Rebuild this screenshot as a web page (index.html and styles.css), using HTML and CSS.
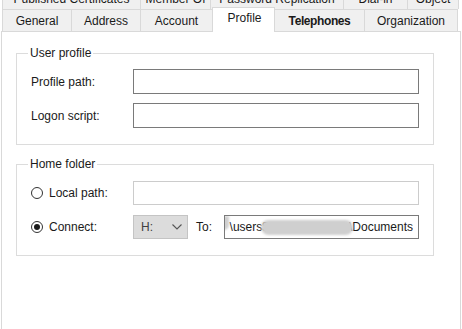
FILE: index.html
```html
<!DOCTYPE html>
<html lang="en">
<head>
    <meta charset="UTF-8">
    <meta name="viewport" content="width=device-width, initial-scale=1.0">
    <title>Profile</title>
    <link rel="stylesheet" href="styles.css">
</head>
<body>
    <div class="dialog">
        <div class="tabs tabs-back">
            <div class="tab tab-pub">Published Certificates</div>
            <div class="tab tab-member">Member Of</div>
            <div class="tab tab-pass">Password Replication</div>
            <div class="tab tab-dial">Dial-in</div>
            <div class="tab tab-object">Object</div>
        </div>
        <div class="tabs tabs-front">
            <div class="tab tab-general">General</div>
            <div class="tab tab-address">Address</div>
            <div class="tab tab-account">Account</div>
            <div class="tab tab-profile active">Profile</div>
            <div class="tab tab-phones">Telephones</div>
            <div class="tab tab-org">Organization</div>
        </div>

        <div class="panel">
            <div class="group group-profile">
                <div class="legend">User profile</div>
                <div class="row">
                    <label class="label" for="profilePath">Profile path:</label>
                    <input class="field" type="text" id="profilePath">
                </div>
                <div class="row">
                    <label class="label" for="logonScript">Logon script:</label>
                    <input class="field" type="text" id="logonScript">
                </div>
            </div>

            <div class="group group-home">
                <div class="legend">Home folder</div>
                <div class="row row-home">
                    <div class="label radio-label">
                        <span class="radio"></span>
                        <span>Local path:</span>
                    </div>
                    <input class="field field-disabled" type="text" disabled>
                </div>
                <div class="row row-home">
                    <div class="label radio-label">
                        <span class="radio checked"></span>
                        <span>Connect:</span>
                    </div>
                    <div class="drive-select">
                        <span>H:</span>
                        <svg class="chevron" width="10" height="6" viewBox="0 0 10 6">
                            <polyline points="0.5,0.5 5,5 9.5,0.5" fill="none" stroke="#555" stroke-width="1.1"/>
                        </svg>
                    </div>
                    <span class="to-label">To:</span>
                    <div class="path-field">
                        <span class="smudge smudge-start"></span>
                        <span>\users$</span>
                        <span class="smudge smudge-mid"></span>
                        <span>\Documents</span>
                    </div>
                </div>
            </div>
        </div>
    </div>
</body>
</html>
```

FILE: styles.css
```css
body {
    margin: 0;
    background: #ffffff;
    font-family: "Liberation Sans", Arial, sans-serif;
    font-size: 12px;
    color: #1a1a1a;
    overflow: hidden;
}

.dialog {
    width: 462px;
    height: 329px;
    overflow: hidden;
}

/* tab strips */
.tabs {
    display: flex;
    margin-left: 2px;
}
.tabs-back {
    margin-top: -13px;
    height: 22px;
}
.tabs-front {
    height: 22px;
    align-items: flex-end;
}
.tab {
    box-sizing: border-box;
    height: 22px;
    display: flex;
    align-items: center;
    justify-content: center;
    background: #f0f0f0;
    border-top: 1px solid #d9d9d9;
    border-left: 1px solid #d9d9d9;
    white-space: nowrap;
}
.tab-object,
.tab-org {
    border-right: 1px solid #d9d9d9;
}
.tab-pub { width: 138px; }
.tab-member { width: 70px; }
.tab-pass { width: 133px; }
.tab-dial { width: 64px; }
.tab-object { width: 52px; }

.tab-general { width: 69px; }
.tab-address { width: 69px; }
.tab-account { width: 72px; }
.tab-profile { width: 63px; }
.tab-phones {
    width: 90px;
    font-weight: bold;
    letter-spacing: -0.4px;
}
.tab-org { width: 94px; }

.tab.active {
    position: relative;
    z-index: 1;
    height: 25px;
    margin-bottom: -1px;
    padding-bottom: 4px;
    padding-left: 2px;
    background: #ffffff;
    border-right: 1px solid #d9d9d9;
    margin-right: -1px;
}

/* page body */
.panel {
    box-sizing: border-box;
    width: 460px;
    height: 310px;
    margin-left: 1px;
    border: 1px solid #d9d9d9;
    background: #ffffff;
    padding-top: 21px;
    padding-left: 14px;
}

.group {
    box-sizing: border-box;
    width: 418px;
    border: 1px solid #dcdcdc;
    padding: 0 14px 16px 14px;
}
.group-home {
    margin-top: 19px;
}
.legend {
    width: fit-content;
    margin: -8px 0 0 -3px;
    padding: 0 2px;
    height: 14px;
    line-height: 14px;
    background: #ffffff;
}

.row {
    display: flex;
    align-items: center;
    margin-top: 9px;
}
.group-profile .row:first-of-type {
    margin-top: 8px;
}
.group-home .row {
    margin-top: 10px;
}
.group-home .row:first-of-type {
    margin-top: 9px;
}

.label {
    width: 102px;
    flex-shrink: 0;
}

.field {
    box-sizing: border-box;
    width: 286px;
    height: 25px;
    margin: 0;
    border: 1px solid #7a7a7a;
    background: #ffffff;
    font: inherit;
    outline: none;
}
.row-home .field {
    height: 24px;
}
.field-disabled {
    border-color: #cccccc;
}

.radio-label {
    display: flex;
    align-items: center;
    gap: 6px;
}
.radio {
    box-sizing: border-box;
    width: 12px;
    height: 12px;
    border: 1px solid #333333;
    border-radius: 50%;
    display: flex;
    align-items: center;
    justify-content: center;
}
.radio.checked::after {
    content: "";
    width: 6px;
    height: 6px;
    border-radius: 50%;
    background: #1a1a1a;
}

.drive-select {
    box-sizing: border-box;
    width: 55px;
    height: 24px;
    display: flex;
    align-items: center;
    justify-content: space-between;
    padding: 0 5px 0 7px;
    background: #dcdcdc;
    border: 1px solid #c4c4c4;
    color: #404040;
}
.to-label {
    margin-left: 8px;
    width: 28px;
}
.path-field {
    box-sizing: border-box;
    width: 195px;
    height: 24px;
    display: flex;
    align-items: center;
    justify-content: flex-end;
    padding-right: 5px;
    border: 1px solid #7a7a7a;
    white-space: nowrap;
    overflow: hidden;
}
.smudge {
    display: inline-block;
    background: #cfcfcf;
    filter: blur(1px);
    flex-shrink: 0;
}
.smudge-start {
    width: 10px;
    height: 14px;
    margin-right: 1px;
    border-radius: 0 0 5px 5px;
    align-self: flex-start;
}
.smudge-mid {
    width: 92px;
    height: 15px;
    border-radius: 8px;
    margin-left: -8px;
    margin-right: -4px;
}
```
